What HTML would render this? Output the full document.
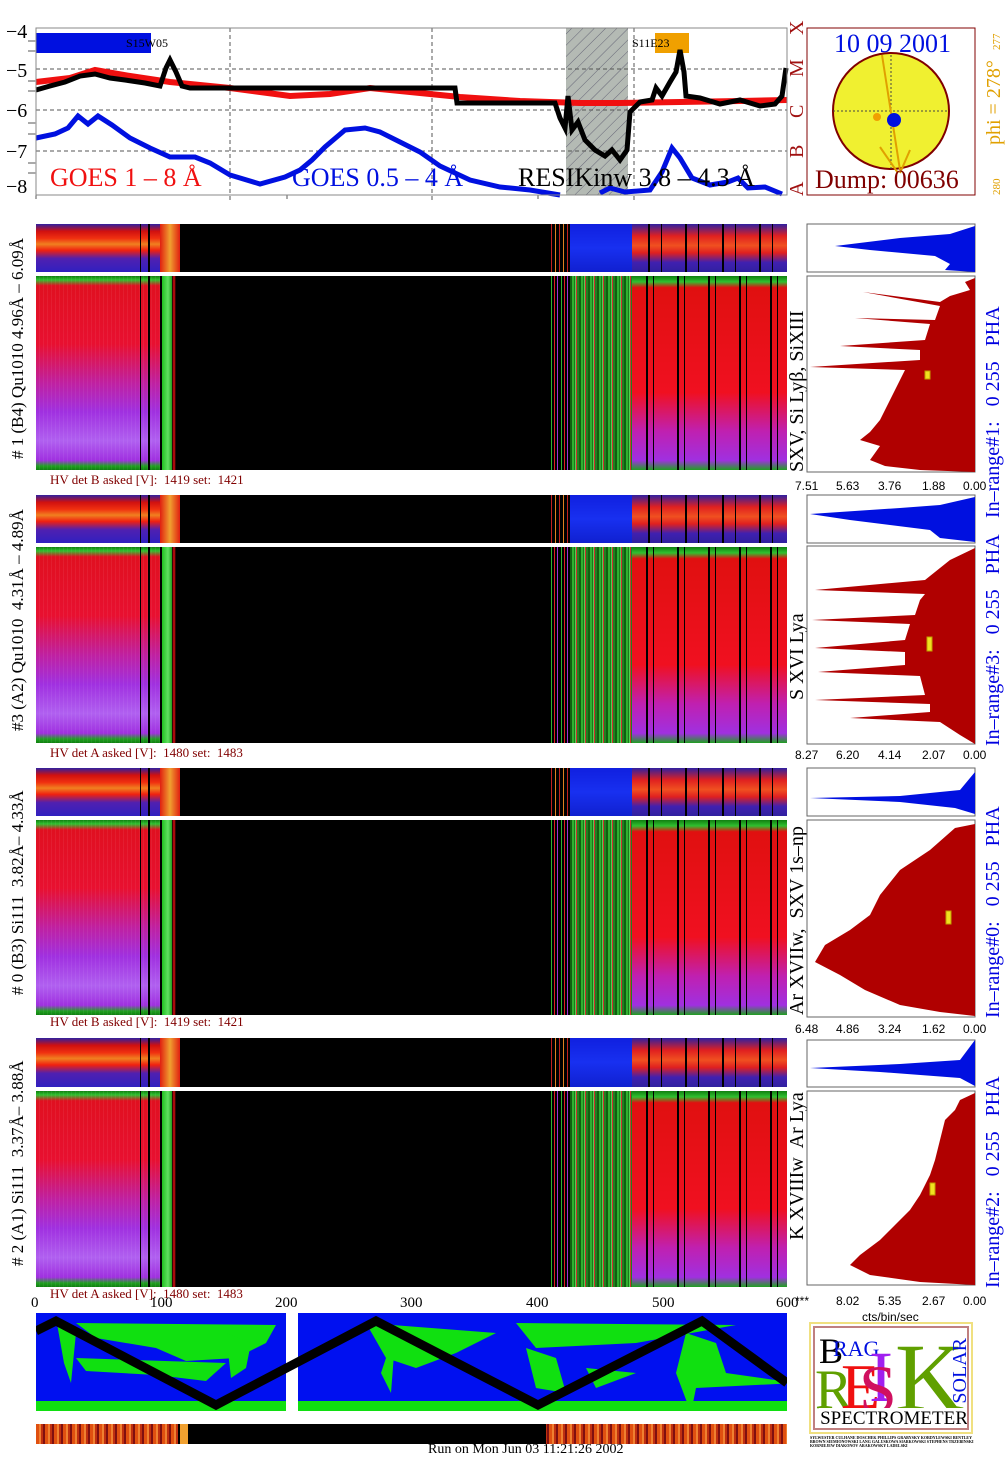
<!DOCTYPE html>
<html><head><meta charset="utf-8">
<style>
*{margin:0;padding:0;box-sizing:border-box}
body{width:1008px;height:1468px;background:#fff;position:relative;overflow:hidden;font-family:"Liberation Serif",serif;color:#000}
.a{position:absolute}
.vt{position:absolute;writing-mode:vertical-rl;transform:rotate(180deg);white-space:nowrap;font-family:"Liberation Serif",serif}
.strip{position:absolute;left:36px;width:751px;height:48px;background:
 linear-gradient(to right,transparent 0,transparent 144px,#000 144px,#000 512px,transparent 512px),
 linear-gradient(to bottom,#3020a0 0%,#d01010 15%,#f03010 30%,#f08020 42%,#f02010 55%,#5020b0 72%,#3020c0 100%)}
.strip .blu{position:absolute;left:534px;width:62px;top:0;height:100%;background:linear-gradient(to bottom,#1020e0,#1830f0 50%,#1020d0)}
.strip .str{position:absolute;left:512px;width:22px;top:0;height:100%;background:repeating-linear-gradient(to right,#000 0 3px,#c02020 3px 4px,#000 4px 7px,#e08020 7px 8px)}
.strip .rt{position:absolute;left:596px;width:155px;top:0;height:100%;background:repeating-linear-gradient(to right,transparent 0 16px,#000 16px 18px,transparent 18px 29px,#000 29px 30px,transparent 30px 37px),linear-gradient(to bottom,#3020a0 0%,#e02020 25%,#f05020 45%,#e02020 60%,#4020b0 80%,#3020a0 100%)}
.strip .ln{position:absolute;left:124px;width:20px;top:0;height:100%;background:linear-gradient(to right,#e02010,#f0a030 50%,#e02010)}
.strip .bl{position:absolute;left:104px;width:16px;top:0;height:100%;background:linear-gradient(to right,#000 0 1px,transparent 1px 8px,#000 8px 10px,transparent 10px)}
.big{position:absolute;left:36px;width:751px;background:#000}
.big .l{position:absolute;left:0;top:0;width:124px;height:100%;background:
 linear-gradient(to right,transparent 0 104px,#000 104px 105px,transparent 105px 112px,#000 112px 114px,transparent 114px),
 repeating-linear-gradient(to right,transparent 0 3px,rgba(255,255,255,.06) 3px 4px),
 linear-gradient(to bottom,#108010 0,#30c030 2%,#e01020 5%,#e81030 35%,#c020a0 55%,#a030e0 70%,#b060f0 85%,#a030e0 95%,#20a020 98%,#108010 100%)}
.big .g{position:absolute;left:124px;top:0;width:18px;height:100%;background:linear-gradient(to right,#000 0,#000 2px,#20c020 2px,#60e060 8px,#20a020 12px,#000 12px,#e01010 14px,#000 16px)}
.big .s{position:absolute;left:512px;top:0;width:22px;height:100%;background:repeating-linear-gradient(to right,#000 0 3px,#30b030 3px 4px,#000 4px 6px,#e02020 6px 7px,#000 7px 9px,#a030d0 9px 10px)}
.big .gr{position:absolute;left:534px;top:0;width:62px;height:100%;background:
 repeating-linear-gradient(to right,#106010 0 2px,#30b030 2px 4px,#1a7a1a 4px 5px,#50d050 5px 6px,#d03030 6px 7px,#208020 7px 9px)}
.big .r{position:absolute;left:596px;top:0;width:155px;height:100%;background:
 repeating-linear-gradient(to right,transparent 0 14px,#000 14px 16px,transparent 16px 21px,#000 21px 22px,transparent 22px 31px),
 linear-gradient(to bottom,#108010 0,#30c030 3%,#e01010 6%,#f01020 60%,#c020b0 80%,#a030e0 95%,#20a020 100%)}
.hv{position:absolute;left:50px;font-size:13px;color:#800000;white-space:nowrap}
.tk{position:absolute;font-size:12px;font-family:"Liberation Sans",sans-serif;white-space:nowrap}
.rl{position:absolute;writing-mode:vertical-rl;transform:rotate(180deg);white-space:nowrap;color:#0000e0;font-size:20px}
</style></head><body>

<svg class="a" style="left:0;top:0" width="1008" height="200">
 <rect x="36" y="28" width="751" height="167" fill="#fff"/>
 <defs><pattern id="h" width="8" height="8" patternUnits="userSpaceOnUse" patternTransform="rotate(45)"><rect width="8" height="8" fill="#b4bab4"/><line x1="0" y1="0" x2="0" y2="8" stroke="#667" stroke-width="1"/></pattern></defs>
 <rect x="566" y="28" width="62" height="167" fill="url(#h)"/>
 <g stroke="#555" stroke-dasharray="4,3" stroke-width="1">
  <line x1="36" y1="69" x2="787" y2="69"/><line x1="36" y1="110" x2="787" y2="110"/><line x1="36" y1="151" x2="787" y2="151"/>
  <line x1="230" y1="28" x2="230" y2="222"/><line x1="432" y1="28" x2="432" y2="222"/><line x1="634" y1="28" x2="634" y2="222"/>
  <line x1="36" y1="195" x2="36" y2="222"/><line x1="287" y1="195" x2="287" y2="222"/><line x1="538" y1="195" x2="538" y2="222"/>
 </g>
 <rect x="36" y="33" width="115" height="20" fill="#0010e0"/>
 <text x="126" y="47" font-size="12">S15W05</text>
 <rect x="655" y="33" width="34" height="20" fill="#f0a000"/>
 <text x="632" y="47" font-size="12">S11E23</text>
 <polyline fill="none" stroke="#f01010" stroke-width="6" points="36,82 70,78 95,70 130,76 170,82 230,88 290,96 330,94 370,88 410,92 460,97 520,101 580,103 620,103 680,102 740,101 787,100"/>
 <polyline fill="none" stroke="#000" stroke-width="5" points="36,90 50,86 65,82 80,76 95,74 110,78 125,80 145,83 160,86 166,68 170,60 176,72 182,86 190,88 300,88 455,88 457,103 555,103 560,118 565,128 568,96 572,130 578,122 585,140 595,150 605,156 612,150 620,160 627,150 630,112 640,102 652,100 656,88 662,96 670,82 676,72 680,50 684,72 686,96 700,98 720,104 740,100 760,106 775,104 782,96 786,68"/>
 <polyline fill="none" stroke="#0010e0" stroke-width="5" points="36,138 55,134 68,128 78,116 88,124 98,116 112,125 130,138 150,148 170,157 195,157 210,163 230,175 260,184 285,177 300,170 312,160 325,147 345,130 365,128 380,132 400,142 420,152 440,166 470,180 500,187 530,190 560,195"/>
 <polyline fill="none" stroke="#0010e0" stroke-width="5" points="600,193 610,188 625,192 650,190 662,172 672,148 680,158 692,178 710,185 728,182 738,178 748,188 765,187 782,194"/>
 <text x="50" y="186" font-size="26" fill="#f01010">GOES 1 – 8 Å</text>
 <text x="292" y="186" font-size="26" fill="#0010e0">GOES 0.5 – 4 Å</text>
 <text x="518" y="186" font-size="26" fill="#000">RESIKinw 3.8 – 4.3 Å</text>
 <rect x="36" y="28" width="751" height="167" fill="none" stroke="#888"/>
 <g font-size="20"><text x="6" y="38">−4</text><text x="6" y="77">−5</text><text x="6" y="117">−6</text><text x="6" y="158">−7</text><text x="6" y="193">−8</text></g>
 <g fill="#aaa"><rect x="28" y="40" width="8" height="2"/><rect x="28" y="50" width="8" height="2"/><rect x="28" y="80" width="8" height="2"/><rect x="28" y="90" width="8" height="2"/><rect x="28" y="122" width="8" height="2"/><rect x="28" y="133" width="8" height="2"/><rect x="28" y="162" width="8" height="2"/><rect x="28" y="172" width="8" height="2"/></g>
 <g font-size="20" fill="#a01010" transform="rotate(-90)">
  <text x="-35" y="803">X</text><text x="-77" y="803">M</text><text x="-118" y="803">C</text><text x="-158" y="803">B</text><text x="-196" y="803">A</text>
 </g>
 <text x="216" y="219" font-size="20">16</text><text x="421" y="219" font-size="20">17</text><text x="624" y="219" font-size="20">18</text>
 <text x="855" y="219" font-size="22">&gt;&gt; hour UT</text>
 <rect x="807" y="28" width="168" height="167" fill="#fff" stroke="#800000"/>
 <ellipse cx="891" cy="111" rx="58" ry="58" fill="#f0f030" stroke="#800000" stroke-width="2"/>
 <line x1="833" y1="111" x2="949" y2="111" stroke="#444" stroke-dasharray="2,2"/>
 <line x1="891" y1="55" x2="891" y2="169" stroke="#444" stroke-dasharray="2,2"/>
 <line x1="882" y1="55" x2="900" y2="170" stroke="#e0a000" stroke-width="2"/>
 <line x1="880" y1="147" x2="898" y2="173" stroke="#e0a000" stroke-width="2"/>
 <line x1="910" y1="150" x2="900" y2="173" stroke="#e0a000" stroke-width="2"/>
 <circle cx="877" cy="117" r="4" fill="#f0a000"/>
 <circle cx="894" cy="120" r="7" fill="#0010e0"/>
 <text x="834" y="52" font-size="26" fill="#0010e0">10 09 2001</text>
 <text x="815" y="188" font-size="26" fill="#800000">Dump: 00636</text>
 <g transform="rotate(-90)" fill="#e0a000"><text x="-145" y="1000" font-size="20">phi = 278°</text><text x="-50" y="1000" font-size="11">277</text><text x="-195" y="1000" font-size="11">280</text></g>
</svg>

<div class="strip" style="top:224px"><div class="bl"></div><div class="ln"></div><div class="str"></div><div class="blu"></div><div class="rt"></div></div>
<div class="big" style="top:276px;height:194px"><div class="l"></div><div class="g"></div><div class="s"></div><div class="gr"></div><div class="r"></div></div>
<div class="hv" style="top:472px">HV det B asked [V]:&nbsp; 1419 set:&nbsp; 1421</div>
<div class="vt" style="left:8px;top:226px;height:246px;font-size:17px;text-align:center"># 1 (B4) Qu1010 4.96Å – 6.09Å</div>
<div class="vt" style="left:786px;top:296px;height:176px;font-size:20px">SXV, Si Lyβ, SiXIII</div>

<div class="strip" style="top:495px"><div class="bl"></div><div class="ln"></div><div class="str"></div><div class="blu"></div><div class="rt"></div></div>
<div class="big" style="top:547px;height:196px"><div class="l"></div><div class="g"></div><div class="s"></div><div class="gr"></div><div class="r"></div></div>
<div class="hv" style="top:745px">HV det A asked [V]:&nbsp; 1480 set:&nbsp; 1483</div>
<div class="vt" style="left:8px;top:497px;height:246px;font-size:17px;text-align:center">#3 (A2) Qu1010&nbsp; 4.31Å – 4.89Å</div>
<div class="vt" style="left:786px;top:600px;height:100px;font-size:20px">S XVI Lya</div>

<div class="strip" style="top:768px"><div class="bl"></div><div class="ln"></div><div class="str"></div><div class="blu"></div><div class="rt"></div></div>
<div class="big" style="top:820px;height:195px"><div class="l"></div><div class="g"></div><div class="s"></div><div class="gr"></div><div class="r"></div></div>
<div class="hv" style="top:1014px">HV det B asked [V]:&nbsp; 1419 set:&nbsp; 1421</div>
<div class="vt" style="left:8px;top:770px;height:246px;font-size:17px;text-align:center"># 0 (B3) Si111&nbsp; 3.82Å– 4.33Å</div>
<div class="vt" style="left:786px;top:815px;height:200px;font-size:20px">Ar XVIIw,&nbsp; SXV 1s–np</div>

<div class="strip" style="top:1038px;height:49px"><div class="bl"></div><div class="ln"></div><div class="str"></div><div class="blu"></div><div class="rt"></div></div>
<div class="big" style="top:1091px;height:196px"><div class="l"></div><div class="g"></div><div class="s"></div><div class="gr"></div><div class="r"></div></div>
<div class="hv" style="top:1286px">HV det A asked [V]:&nbsp; 1480 set:&nbsp; 1483</div>
<div class="vt" style="left:8px;top:1040px;height:246px;font-size:17px;text-align:center"># 2 (A1) Si111&nbsp; 3.37Å– 3.88Å</div>
<div class="vt" style="left:786px;top:1080px;height:160px;font-size:20px">K XVIIIw&nbsp; Ar Lya</div>

<div class="a" style="top:1295px;left:0;width:800px;font-size:15px">
 <span class="a" style="left:31px">0</span><span class="a" style="left:150px">100</span><span class="a" style="left:275px">200</span><span class="a" style="left:400px">300</span><span class="a" style="left:526px">400</span><span class="a" style="left:652px">500</span><span class="a" style="left:776px">600</span>
</div>

<svg class="a" style="left:0;top:0" width="1008" height="1468">
 <g fill="none" stroke="#666">
  <rect x="807" y="224" width="168" height="48"/><rect x="807" y="276" width="168" height="196"/>
  <rect x="807" y="495" width="168" height="48"/><rect x="807" y="546" width="168" height="198"/>
  <rect x="807" y="768" width="168" height="48"/><rect x="807" y="820" width="168" height="197"/>
  <rect x="807" y="1040" width="168" height="47"/><rect x="807" y="1091" width="168" height="194"/>
 </g>
 <g fill="#0010e0">
  <path d="M975,226 L950,234 L900,238 L835,246 L870,250 L935,256 L950,264 L945,270 L975,272Z"/>
  <path d="M975,497 L940,505 L900,508 L810,514 L850,520 L930,530 L940,538 L975,542Z"/>
  <path d="M975,772 L960,790 L900,796 L810,798 L900,802 L955,808 L975,814Z"/>
  <path d="M975,1040 L960,1060 L900,1064 L810,1068 L880,1072 L960,1078 L975,1086Z"/>
 </g>
 <g fill="#b00000">
  <path d="M975,278 L965,282 L970,290 L950,296 L940,302 L863,292 L940,306 L935,320 L855,318 L930,324 L925,340 L840,346 L920,350 L920,360 L810,367 L905,370 L900,380 L890,400 L880,420 L870,432 L860,440 L880,446 L870,460 L885,466 L920,470 L975,472Z"/>
  <path d="M975,548 L950,560 L935,572 L925,580 L815,590 L925,594 L920,600 L915,615 L812,620 L910,624 L905,640 L815,648 L905,652 L905,665 L818,672 L920,676 L925,695 L815,700 L930,704 L930,712 L850,718 L940,722 L960,735 L975,744Z"/>
  <path d="M975,824 L955,828 L930,850 L900,870 L880,895 L870,915 L850,930 L825,945 L815,962 L840,975 L865,990 L900,1005 L940,1012 L975,1016Z"/>
  <path d="M975,1093 L960,1100 L955,1110 L945,1120 L940,1140 L935,1160 L930,1175 L920,1195 L910,1210 L895,1225 L880,1240 L860,1255 L850,1265 L870,1275 L920,1282 L975,1285Z"/>
 </g>
 <g fill="#f0e020" stroke="#c0a000"><rect x="925" y="371" width="5" height="8"/><rect x="927" y="637" width="5" height="14"/><rect x="946" y="911" width="5" height="13"/><rect x="930" y="1183" width="5" height="12"/></g>
</svg>
<div class="tk" style="left:795px;top:479px">7.51</div><div class="tk" style="left:836px;top:479px">5.63</div><div class="tk" style="left:878px;top:479px">3.76</div><div class="tk" style="left:922px;top:479px">1.88</div><div class="tk" style="left:963px;top:479px">0.00</div>
<div class="tk" style="left:795px;top:748px">8.27</div><div class="tk" style="left:836px;top:748px">6.20</div><div class="tk" style="left:878px;top:748px">4.14</div><div class="tk" style="left:922px;top:748px">2.07</div><div class="tk" style="left:963px;top:748px">0.00</div>
<div class="tk" style="left:795px;top:1022px">6.48</div><div class="tk" style="left:836px;top:1022px">4.86</div><div class="tk" style="left:878px;top:1022px">3.24</div><div class="tk" style="left:922px;top:1022px">1.62</div><div class="tk" style="left:963px;top:1022px">0.00</div>
<div class="tk" style="left:795px;top:1294px">***</div><div class="tk" style="left:836px;top:1294px">8.02</div><div class="tk" style="left:878px;top:1294px">5.35</div><div class="tk" style="left:922px;top:1294px">2.67</div><div class="tk" style="left:963px;top:1294px">0.00</div>
<div class="tk" style="left:862px;top:1310px">cts/bin/sec</div>
<div class="rl" style="left:982px;top:256px;height:262px">In–range#1:&nbsp;&nbsp; 0 255&nbsp;&nbsp; PHA</div>
<div class="rl" style="left:982px;top:514px;height:232px">In–range#3:&nbsp;&nbsp; 0 255&nbsp;&nbsp; PHA</div>
<div class="rl" style="left:982px;top:780px;height:238px">In–range#0:&nbsp;&nbsp; 0 255&nbsp;&nbsp; PHA</div>
<div class="rl" style="left:982px;top:1050px;height:238px">In–range#2:&nbsp;&nbsp; 0 255&nbsp;&nbsp; PHA</div>

<svg class="a" style="left:36px;top:1313px" width="751" height="98">
 <rect width="751" height="98" fill="#0010f0"/>
 <g fill="#10e010">
  <rect x="0" y="88" width="751" height="10"/>
  <path d="M40,10 L240,12 L230,30 L200,45 L150,48 L120,35 L60,25Z"/>
  <path d="M40,45 L190,50 L170,68 L120,62 L50,58Z"/>
  <path d="M20,5 L40,20 L35,70 L28,50Z"/>
  <path d="M330,10 L460,20 L420,40 L380,55 L350,45Z"/>
  <path d="M480,10 L700,12 L600,30 L500,35Z"/>
  <path d="M360,15 L355,80 L345,60Z"/>
  <path d="M650,20 L680,30 L690,60 L760,70 L660,75 L655,100 L640,60Z"/>
  <path d="M490,35 L520,45 L530,80 L500,75 L495,55Z"/>
  <path d="M550,55 L600,60 L560,75Z"/>
  <path d="M190,20 L215,30 L210,55 L195,65Z"/>
 </g>
 <rect x="250" y="0" width="12" height="98" fill="#fff"/>
 <polyline fill="none" stroke="#000" stroke-width="9" points="0,18 20,8 180,92 340,8 502,92 666,8 751,70"/>
</svg>

<div class="a" style="left:36px;top:1424px;width:751px;height:20px;background:
 linear-gradient(to right,transparent 0,transparent 142px,#000 142px,#000 510px,transparent 510px),
 repeating-linear-gradient(to right,#e05010 0 3px,#f08030 3px 5px,#c03010 5px 7px,#801010 7px 9px)"></div>
<div class="a" style="left:180px;top:1424px;width:8px;height:20px;background:#f0a030"></div>
<div class="a" style="left:428px;top:1442px;font-size:14px;white-space:nowrap">Run on Mon Jun 03 11:21:26 2002</div>

<div class="a" style="left:809px;top:1322px;width:164px;height:112px;border:2px solid #f0e080;background:#fff">
 <div class="a" style="left:2px;top:2px;width:156px;height:104px;border:2px solid #c08080;overflow:hidden">
  <div class="a" style="left:4px;top:2px;font-size:36px">B</div>
  <div class="a" style="left:18px;top:8px;font-size:22px;color:#0010e0">RAG</div>
  <div class="a" style="left:0;top:30px;font-size:56px;color:#60a000">R</div>
  <div class="a" style="left:26px;top:22px;font-size:64px;color:#f01010">E</div>
  <div class="a" style="left:54px;top:8px;font-size:72px;color:#a020f0">I</div>
  <div class="a" style="left:44px;top:22px;font-size:68px;color:#d01060">S</div>
  <div class="a" style="left:80px;top:-6px;font-size:96px;color:#60a000">K</div>
  <div class="a" style="left:134px;top:10px;font-size:20px;color:#0010e0;writing-mode:vertical-rl;transform:rotate(180deg)">SOLAR</div>
  <div class="a" style="left:4px;top:80px;font-size:19px;background:#fff;width:150px;text-align:center;white-space:nowrap">SPECTROMETER</div>
 </div>
</div>
<div class="a" style="left:810px;top:1436px;width:164px;font-size:4px;line-height:4px;font-weight:bold">SYLWESTER CULHANE DOSCHEK PHILLIPS GRABYSKY KORDYLEWSKI BENTLEY BROWN SIEMIONOWSKI LANG GALUSKOWA SIARKOWSKI STEPHENS TRZEBINSKI KORNIEJEW DIAKONOV ARAKOWSKY LADELSKI</div>
</body></html>
